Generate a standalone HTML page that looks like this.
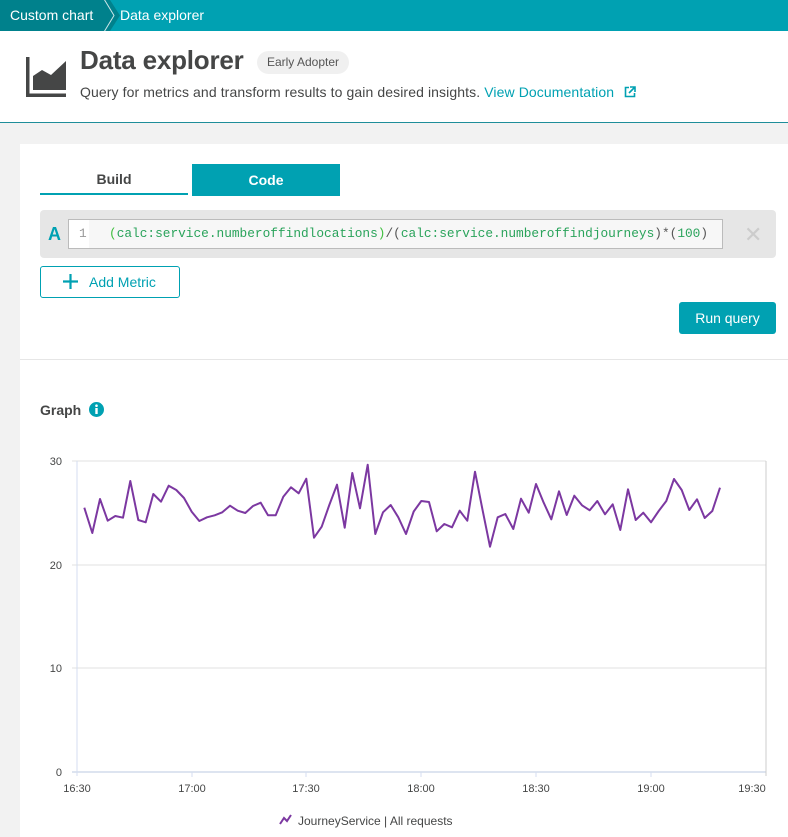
<!DOCTYPE html>
<html><head><meta charset="utf-8"><style>
*{box-sizing:border-box;margin:0;padding:0}
body{width:788px;height:837px;overflow:hidden;background:#f2f2f2;font-family:"Liberation Sans",sans-serif;color:#454646;position:relative}
.abs{position:absolute}
.top{left:0;top:0;width:788px;height:31px;background:#00a1b2}
.crumb1{left:0;top:0;width:110px;height:31px;background:#00818c}
.top span{position:absolute;color:#fff;font-size:14px;top:7px}
.hdr{left:0;top:31px;width:788px;height:92px;background:#fff;border-bottom:1px solid #1e8e9a}
.panel{left:20px;top:144px;width:768px;height:693px;background:#fff}
.mono{font-family:"Liberation Mono",monospace;font-size:12.8px}
</style></head><body>
<div class="abs top"></div>
<div class="abs crumb1"></div>
<svg class="abs" style="left:100px;top:0" width="20" height="31"><polygon points="0,0 10,0 20,15.5 10,31 0,31 10,15.5" fill="#00818c"/><polyline points="4,-1 14,15.5 4,32" fill="none" stroke="#fff" stroke-width="1" opacity=".8"/></svg>
<div class="top abs" style="background:none"><span style="left:10px">Custom chart</span><span style="left:120px">Data explorer</span></div>
<div class="abs hdr"></div>
<svg class="abs" style="left:24px;top:56px" width="44" height="42"><rect x="2" y="1" width="3.5" height="40" fill="#454646"/><rect x="2" y="37.5" width="40" height="3.5" fill="#454646"/><polygon points="9,34 9,20 18,14 27,19 42,5 42,34" fill="#454646"/></svg>
<div class="abs" style="left:80px;top:45px;font-size:26px;font-weight:bold;color:#454646;letter-spacing:-0.2px">Data explorer</div>
<div class="abs" style="left:257px;top:51px;height:23px;width:92px;background:#f0f0f0;border-radius:12px;font-size:12px;line-height:23px;text-align:center;color:#555">Early Adopter</div>
<div class="abs" style="left:80px;top:84px;font-size:14px;color:#454646;letter-spacing:0.1px">Query for metrics and transform results to gain desired insights. <span style="color:#00a1b2">View Documentation</span></div>
<svg class="abs" style="left:624px;top:86px" width="12" height="12"><path d="M5 1.5H1.5V10.5H10.5V7" fill="none" stroke="#00a1b2" stroke-width="1.6"/><path d="M6 1H11V6M11 1L5 7" fill="none" stroke="#00a1b2" stroke-width="1.6"/></svg>
<div class="abs panel"></div>
<div class="abs" style="left:40px;top:164px;width:148px;height:31px;border-bottom:2px solid #00a1b2;text-align:center;font-size:14px;font-weight:bold;line-height:31px;color:#454646">Build</div>
<div class="abs" style="left:192px;top:164px;width:148px;height:32px;background:#00a1b2;text-align:center;font-size:14px;font-weight:bold;line-height:32px;color:#fff">Code</div>
<div class="abs" style="left:40px;top:210px;width:736px;height:48px;background:#e6e6e6;border-radius:4px"></div>
<div class="abs" style="left:48px;top:224px;font-size:18px;font-weight:bold;color:#00a1b2">A</div>
<div class="abs" style="left:68px;top:219px;width:655px;height:30px;border:1px solid #bbb;background:#f7f7f7"></div>
<div class="abs" style="left:69px;top:220px;width:20px;height:28px;background:#fff"></div>
<div class="abs mono" style="left:79px;top:226px;color:#999">1</div>
<div class="abs mono" style="left:109px;top:226px;color:#555;white-space:pre"><span style="color:#3fbf3f">(</span><span style="color:#2aa35b">calc:service.numberoffindlocations</span><span style="color:#3fbf3f">)</span>/(<span style="color:#2aa35b">calc:service.numberoffindjourneys</span>)*(<span style="color:#2aa35b">100</span>)</div>
<div class="abs" style="left:744px;top:222px;font-size:22px;color:#ccc">✕</div>
<div class="abs" style="left:40px;top:266px;width:140px;height:32px;border:1px solid #00a1b2;border-radius:3px;font-size:14px;color:#00a1b2;line-height:30px;padding-left:48px">Add Metric</div>
<svg class="abs" style="left:63px;top:274px" width="15" height="15"><path d="M7.5 0V15M0 7.5H15" stroke="#00a1b2" stroke-width="2.2"/></svg>
<div class="abs" style="left:679px;top:302px;width:97px;height:32px;background:#00a1b2;border-radius:3px;color:#fff;font-size:14px;text-align:center;line-height:32px">Run query</div>
<div class="abs" style="left:20px;top:359px;width:768px;height:1px;background:#e6e6e6"></div>
<div class="abs" style="left:40px;top:402px;font-size:14px;font-weight:bold;color:#454646">Graph</div>
<svg class="abs" style="left:89px;top:402px" width="15" height="15"><circle cx="7.5" cy="7.5" r="7.5" fill="#00a1b2"/><rect x="6.3" y="6" width="2.4" height="6" fill="#fff"/><circle cx="7.5" cy="3.7" r="1.3" fill="#fff"/></svg>
<svg class="abs" style="left:0;top:0" width="788" height="837" font-family="Liberation Sans,sans-serif" font-size="11" fill="#454646">
<g stroke="#ebebeb" stroke-width="1.5"><line x1="72" y1="461" x2="766" y2="461"/><line x1="72" y1="565" x2="766" y2="565"/><line x1="72" y1="668" x2="766" y2="668"/></g>
<line x1="72" y1="772" x2="766" y2="772" stroke="#dde4f0" stroke-width="2"/>
<line x1="77" y1="461" x2="77" y2="776" stroke="#d5def0" stroke-width="1"/>
<line x1="766" y1="461" x2="766" y2="776" stroke="#ccc" stroke-width="1"/>
<g stroke="#d5def0"><line x1="192" y1="772" x2="192" y2="777"/><line x1="306" y1="772" x2="306" y2="777"/><line x1="421" y1="772" x2="421" y2="777"/><line x1="536" y1="772" x2="536" y2="777"/><line x1="651" y1="772" x2="651" y2="777"/></g>
<g text-anchor="end"><text x="62" y="465">30</text><text x="62" y="569">20</text><text x="62" y="672">10</text><text x="62" y="776">0</text></g>
<g text-anchor="middle"><text x="77" y="792">16:30</text><text x="192" y="792">17:00</text><text x="306" y="792">17:30</text><text x="421" y="792">18:00</text><text x="536" y="792">18:30</text><text x="651" y="792">19:00</text><text x="752" y="792">19:30</text></g>
<polyline fill="none" stroke="#7c38a1" stroke-width="2" stroke-linejoin="round" points="84.3,507.7 92.3,533 100,499 107.7,520.7 115.3,516 123,517.7 130.3,481 138.3,520 145.7,522.3 153.3,494 161,501.7 168.7,485.7 176.3,490 184,498 191.7,511.7 199.3,521 207,517.3 214.7,515.3 222.3,512.3 230,505.7 237.7,510.7 245.3,513 253,506 260.7,502.7 268,515.3 275.7,515.3 283.3,496.7 291,487.3 298.7,493.3 306.3,478.7 314,537.7 321.7,526.7 329.3,505 337,484.7 344.7,527.7 352.3,473 360,508.3 367.7,464.7 375.3,534 383,512.3 390.7,505 398.3,517.3 406,534 413.7,511.5 421.3,501 429,502 436.7,531.3 444.3,524 452,527.3 459.7,510.7 467.3,520.7 475,471.7 482.7,510.7 490,546.7 497.7,517.3 505.3,514 513.3,529 521,498.7 528.7,512.7 536,484 543.7,502.7 551.3,519.3 559,491.3 566.7,515 574.3,495.7 582,505.3 589.7,510.3 597.3,501 605,514.3 612.7,504.3 620.3,530 628,489.3 635.7,520 643.3,512.7 651,522.3 658.7,511 666.3,501 674,479 681.7,490 689.3,510 697,499.3 704.7,518 712.3,511 720,487.7"/>
<polyline points="280,824 284,818 287,821 291,815" fill="none" stroke="#7c38a1" stroke-width="2"/>
<text x="298" y="825" font-size="12">JourneyService | All requests</text>
</svg>
</body></html>
